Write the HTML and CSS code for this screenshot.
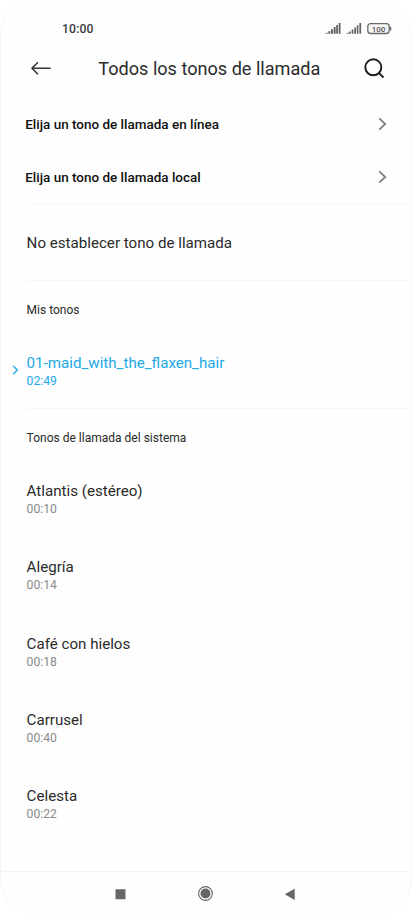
FILE: index.html
```html
<!DOCTYPE html>
<html lang="es">
<head>
<meta charset="utf-8">
<meta name="viewport" content="width=device-width, initial-scale=1">
<title>Todos los tonos de llamada</title>
<link rel="stylesheet" href="styles.css">
</head>
<body>
<div class="screen">
  <div class="status">
    <span class="clock">10:00</span>
    <svg class="indicators" width="68" height="14" viewBox="0 0 68 14">
      <g fill="#606060">
        <path d="M0 11.800 2.500 10.300V11.800zM3.300 9.300h1.900v2.500H3.300zM6 7.200h1.900v4.600H6zM8.700 5h1.900v6.800H8.700zM11.200 3h1.700v8.800h-1.700zM13.700 1h1.800v10.800h-1.800z"/>
        <path d="M21 11.800 23.500 10.300V11.800zM24 9.500h1.700v2.300H24zM26.700 7.500h1.700v4.300h-1.700zM29.300 5.500h1.700v6.300h-1.700zM31.800 3.300h1.600v8.500h-1.600zM34.400 1h1.700v10.800h-1.700z"/>
      </g>
      <rect x="42.800" y="1.700" width="21.400" height="9.800" rx="2.800" fill="#f7f7f7" stroke="#6a6a6a" stroke-width="1.300"/>
      <path d="M65.600 4.800v3.600" stroke="#666" stroke-width="1.300"/>
      <text class="battery" x="53.500" y="9.600" text-anchor="middle">100</text>
    </svg>
  </div>
  <header class="header">
    <svg class="back" width="22" height="16" viewBox="0 0 22 16" fill="none" stroke="#333" stroke-width="1.500"><path d="M20.500 8.300H2M8 2.300 2 8.300l6 6"/></svg>
    <h1>Todos los tonos de llamada</h1>
    <svg class="search" width="22" height="22" viewBox="0 0 22 22" fill="none" stroke="#1c1c1c" stroke-width="1.900"><circle cx="10.300" cy="10.300" r="8"/><path d="m15.800 15.800 4.700 4.700"/></svg>
  </header>
  <nav class="links">
    <a class="link"><span>Elija un tono de llamada en línea</span><svg width="10" height="14" viewBox="0 0 10 14"><path d="m1.200 1.300 6.100 5.700-6.100 5.700"/></svg></a>
    <a class="link"><span>Elija un tono de llamada local</span><svg width="10" height="14" viewBox="0 0 10 14"><path d="m1.200 1.300 6.100 5.700-6.100 5.700"/></svg></a>
  </nav>
  <div class="none name">No establecer tono de llamada</div>
  <section class="mine">
    <h2>Mis tonos</h2>
    <div class="tone selected">
      <svg class="marker" width="8" height="10" viewBox="0 0 8 10"><path d="m1.200 1 4.200 4-4.200 4"/></svg>
      <div class="name">01-maid_with_the_flaxen_hair</div><div class="time">02:49</div>
    </div>
  </section>
  <section class="system">
    <h2>Tonos de llamada del sistema</h2>
    <div class="tone"><div class="name">Atlantis (estéreo)</div><div class="time">00:10</div></div>
    <div class="tone"><div class="name">Alegría</div><div class="time">00:14</div></div>
    <div class="tone"><div class="name">Café con hielos</div><div class="time">00:18</div></div>
    <div class="tone"><div class="name">Carrusel</div><div class="time">00:40</div></div>
    <div class="tone"><div class="name">Celesta</div><div class="time">00:22</div></div>
  </section>
  <footer class="navbar">
    <svg width="410" height="42" viewBox="1 0 410 42" fill="#666">
      <path d="M115.500 17.200h10v10h-10zM284.800 22.300l9.900-5.600v11.200z"/>
      <circle cx="205.500" cy="21.500" r="6.900" fill="none" stroke="#666" stroke-width="1.100"/>
      <circle cx="205.500" cy="21.500" r="5"/>
    </svg>
  </footer>
</div>
</body>
</html>
```
FILE: styles.css
```css
* { box-sizing: border-box; }
body { margin: 0; background: #fff; font-family: Roboto, sans-serif; color: #2b2b2b; }
h1, h2 { margin: 0; font-weight: 400; }
svg { display: block; flex: none; }
.screen {
  display: flex;
  flex-direction: column;
  height: 915px;
  overflow: hidden;
  background: #fefefe;
  border: solid #f5f5f5;
  border-width: 0 1px;
  border-radius: 36px;
}
.status { height: 44px; padding: 22px 18px 0 61px; display: flex; justify-content: space-between; align-items: flex-start; }
.clock { font-size: 12.2px; line-height: 15px; font-weight: 500; letter-spacing: .15px; color: #3a3a3a; }
.battery { font-size: 8px; font-weight: 500; fill: #555; }
.header { height: 54px; padding: 0 26px 6px 29px; display: flex; align-items: center; }
.header h1 { flex: 1; margin-left: 46.3px; padding-top: 2px; font-size: 18.1px; line-height: 24px; white-space: nowrap; }
.links { height: 106px; padding-left: 24.2px; }
.link { height: 53px; padding-right: 23px; display: flex; align-items: center; justify-content: space-between; font-size: 13.48px; line-height: 17px; font-weight: 500; color: #111; }
.link svg { margin-bottom: 2px; }
.link svg path { fill: none; stroke: #808080; stroke-width: 1.8; }
.none, .mine, .system { margin-left: 25.6px; border-top: 1px solid #f6f6f6; }
.none { height: 77px; flex: none; margin-top: -1px; padding-top: 29px; }
.name { font-size: 15.13px; line-height: 20px; white-space: nowrap; }
.time { font-size: 12.2px; line-height: 16px; color: #8a8a8a; }
.mine { height: 128px; }
.system { flex: 1; }
h2 { padding-top: 21px; font-size: 12.02px; line-height: 16px; }
.tone { height: 76.3px; padding-top: 35px; position: relative; }
.selected .name, .selected .time { color: #22a9e6; }
.marker { position: absolute; left: -15px; top: 47px; }
.marker path { fill: none; stroke: #22a9e6; stroke-width: 1.4; }
.navbar { height: 44px; border-top: 1px solid #f4f4f4; }
```
